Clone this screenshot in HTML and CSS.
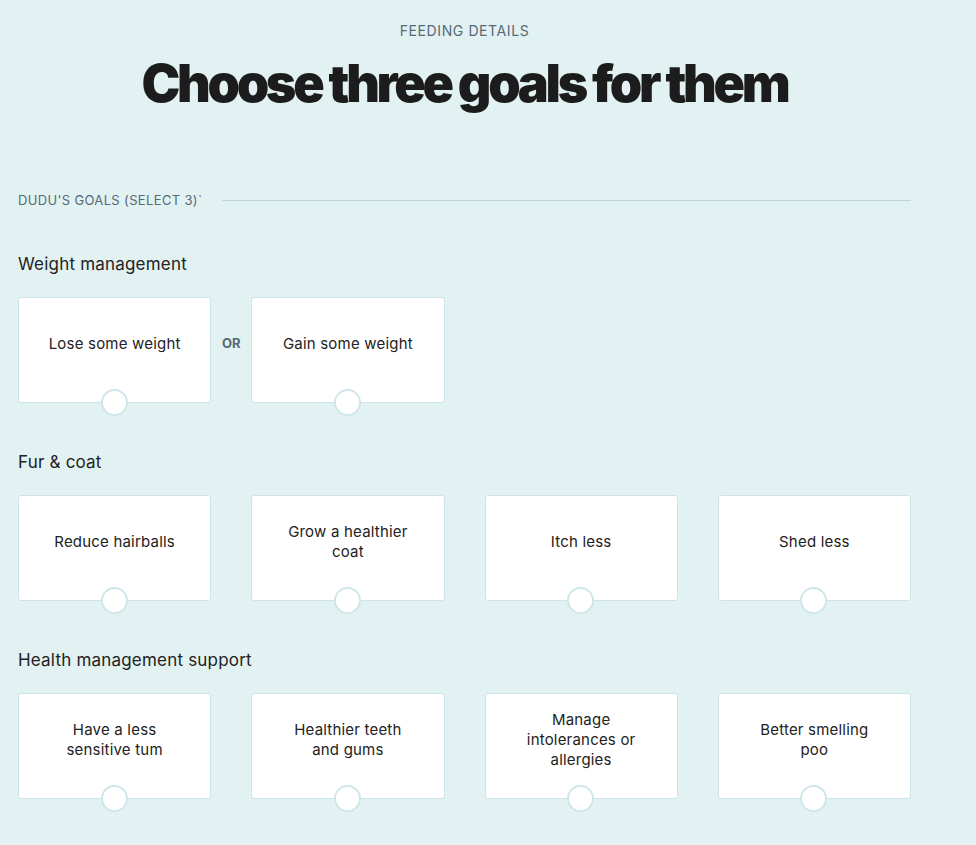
FILE: index.html
```html
<!doctype html>
<html lang="en">
<head>
  <meta charset="utf-8">
  <title>Feeding details</title>
  <link rel="stylesheet" href="styles.css">
</head>
<body>
  <div class="page">
    <div class="head">
      <div class="eyebrow">FEEDING DETAILS</div>
      <h1>Choose three goals for them</h1>
    </div>

    <div class="divider">
      <span>DUDU'S GOALS (SELECT 3)`</span>
      <hr>
    </div>

    <div class="group">
      <h2>Weight management</h2>
      <div class="cards pair">
        <button class="card"><span>Lose some weight</span></button>
        <div class="or">OR</div>
        <button class="card"><span>Gain some weight</span></button>
      </div>
    </div>

    <div class="group">
      <h2>Fur &amp; coat</h2>
      <div class="cards">
        <button class="card"><span>Reduce hairballs</span></button>
        <button class="card"><span>Grow a healthier coat</span></button>
        <button class="card"><span>Itch less</span></button>
        <button class="card"><span>Shed less</span></button>
      </div>
    </div>

    <div class="group">
      <h2>Health management support</h2>
      <div class="cards">
        <button class="card"><span>Have a less sensitive tum</span></button>
        <button class="card"><span>Healthier teeth and gums</span></button>
        <button class="card"><span>Manage intolerances or allergies</span></button>
        <button class="card"><span>Better smelling poo</span></button>
      </div>
    </div>
  </div>
</body>
</html>
```

FILE: styles.css
```css
html, body {
	margin: 0;
	padding: 0;
	background: #e2f1f1;
	font-family: "Inter", "Liberation Sans", sans-serif;
	color: #222;
}
button { cursor: pointer; font: inherit; color: inherit; }
button:focus { outline: none; }

.page {
	width: 893px;
	margin-left: 18px;
	padding-top: 22px;
	padding-bottom: 40px;
}

.head { text-align: center; }
.eyebrow {
	font-size: 14px;
	color: #566a78;
	letter-spacing: 0.6px;
	line-height: 17px;
}
h1 {
	margin: 15px 0 0;
	font-size: 52px;
	font-weight: 900;
	letter-spacing: -3.3px;
	line-height: 60px;
	color: #1c1c1c;
}

.divider {
	display: flex;
	align-items: center;
	margin-top: 78px;
	height: 16px;
}
.divider span {
	font-size: 13px;
	color: #566a78;
	letter-spacing: 0.35px;
	width: 204px;
	flex: none;
}
.divider hr {
	flex: 1;
	border: none;
	border-top: 1px solid #bcd6db;
	margin: 0;
}

.group { margin-top: 45px; }
.group + .group { margin-top: 48px; }
h2 {
	margin: 0;
	font-size: 17px;
	font-weight: 400;
	letter-spacing: 0.2px;
	line-height: 22px;
	color: #222;
}

.cards {
	display: grid;
	grid-template-columns: repeat(4, 1fr);
	column-gap: 40px;
	margin-top: 22px;
}
.cards.pair {
	grid-template-columns: 1fr 40px 1fr 40px 1fr 40px 1fr;
	column-gap: 0;
}
.cards .or {
	display: flex;
	align-items: center;
	justify-content: center;
	padding-bottom: 14px;
	font-size: 13px;
	font-weight: 700;
	color: #566a78;
}

.card {
	position: relative;
	height: 106px;
	background: #fff;
	border: 1px solid #cfe4e8;
	border-radius: 3px;
	padding: 18px 28px 30px;
	display: flex;
	align-items: center;
	justify-content: center;
	text-align: center;
	font-size: 15px;
	letter-spacing: 0.2px;
	line-height: 20px;
	color: #222;
}
.card::after {
	content: "";
	position: absolute;
	left: 50%;
	bottom: -14px;
	width: 23px;
	height: 23px;
	margin-left: -14px;
	border-radius: 50%;
	background: #fff;
	border: 2px solid #cfe6ea;
}
```
